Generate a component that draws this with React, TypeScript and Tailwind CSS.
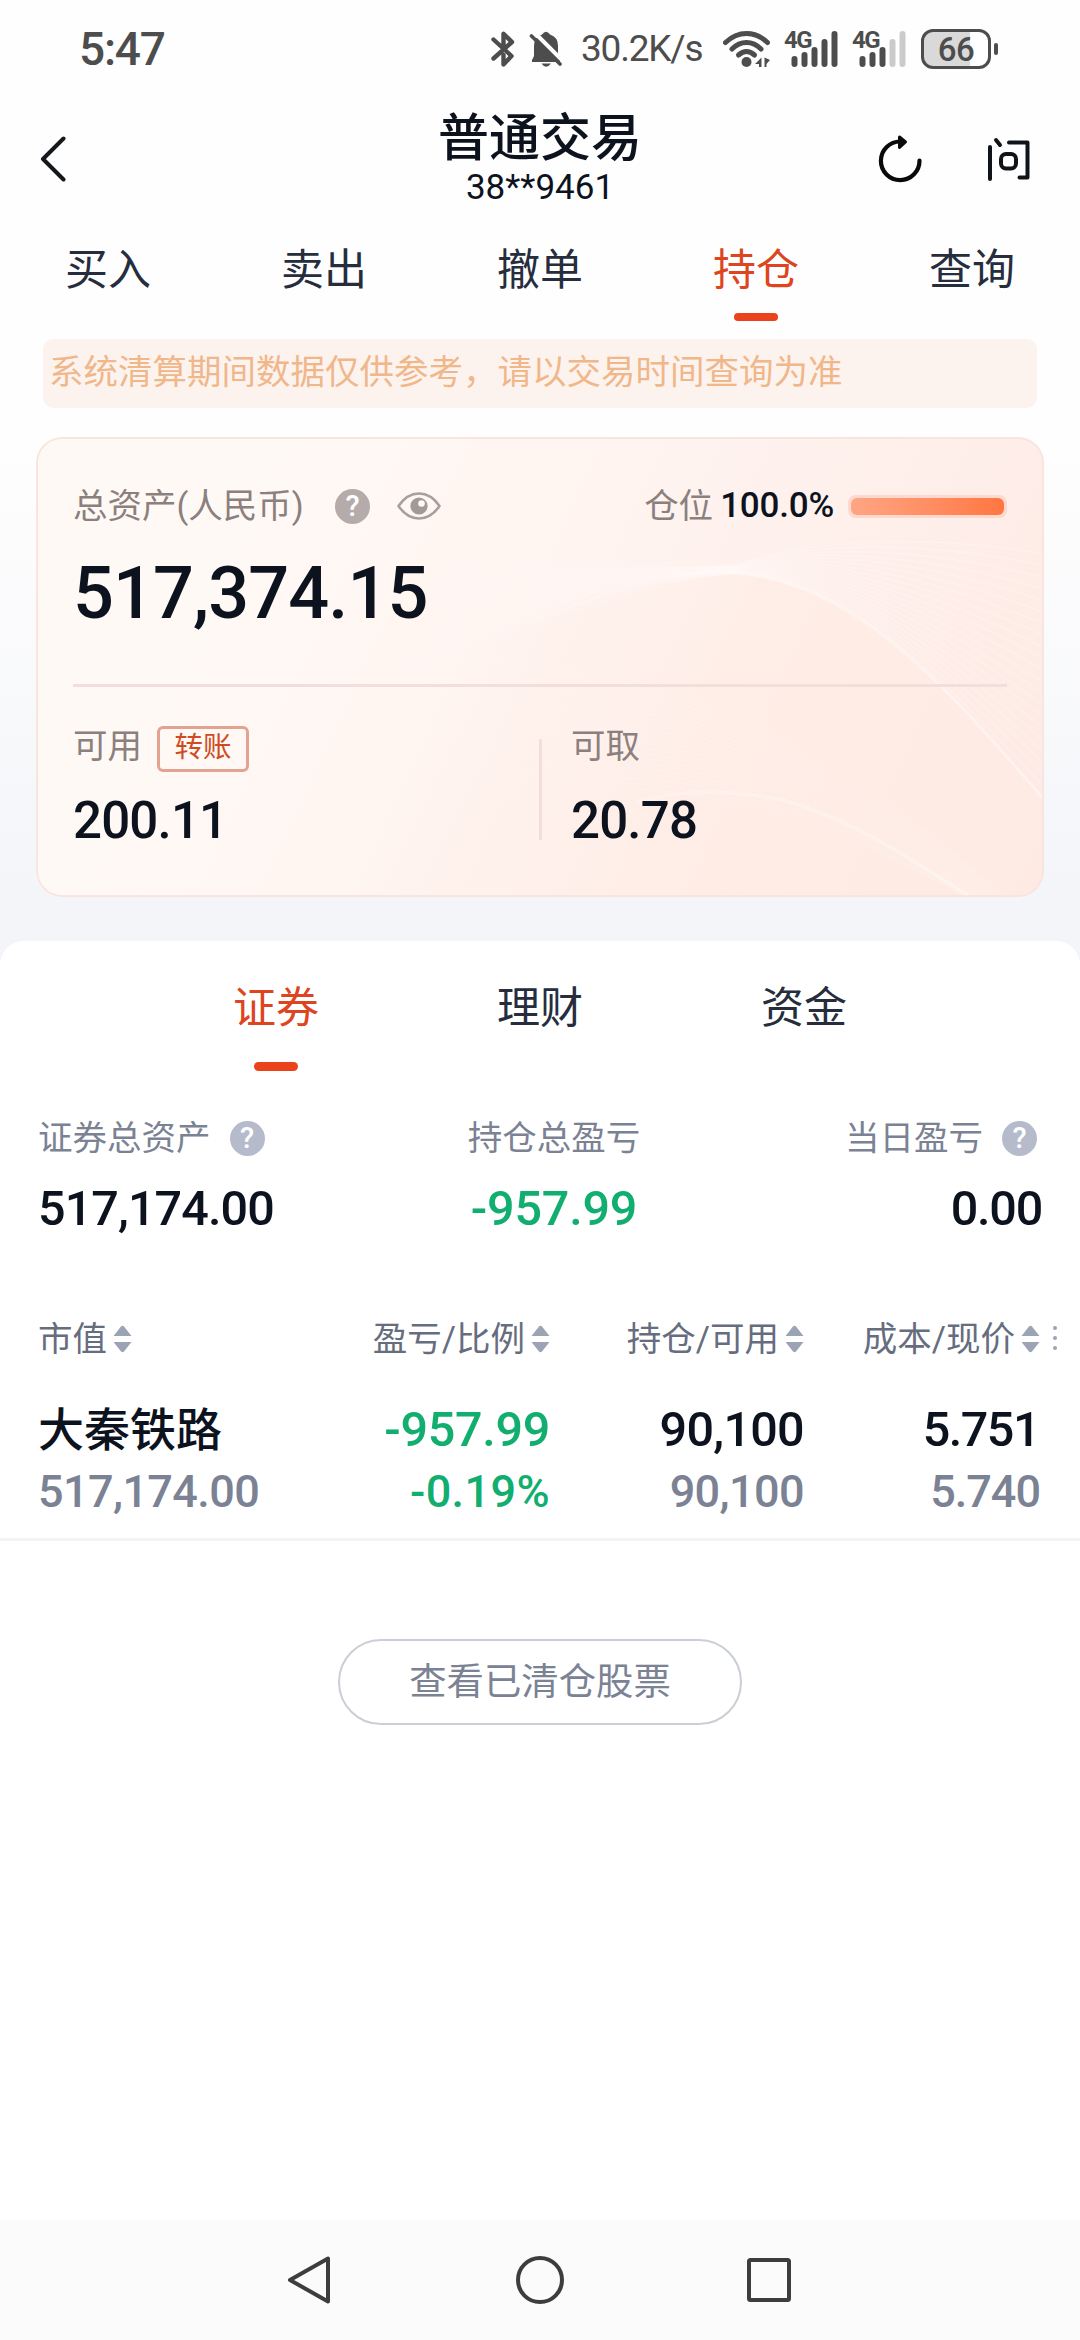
import React from "react";
import clsx from "clsx";

const tabs = ["买入", "卖出", "撤单", "持仓", "查询"];
const assetTabs = ["证券", "理财", "资金"];
const columns = ["市值", "盈亏/比例", "持仓/可用", "成本/现价"];

const HelpBadge: React.FC<{ className?: string }> = ({ className }) => (
  <span
    className={clsx(
      "flex h-[35px] w-[35px] items-center justify-center rounded-full text-[29px] leading-none font-medium text-white",
      className
    )}
  >
    ?
  </span>
);

const SortIcon = () => (
  <svg width="19" height="28" viewBox="0 0 19 28" fill="#9ca3b5">
    <path d="M8 1.6 Q9.5 0 11 1.6 L18.5 11 H0.5 Z" />
    <path d="M8 26.4 Q9.5 28 11 26.4 L18.5 17 H0.5 Z" />
  </svg>
);

const EyeIcon = () => (
  <svg width="44" height="28" viewBox="0 0 44 28" fill="none">
    <path
      d="M1.5 14 C7 6 14 1.5 22 1.5 S37 6 42.5 14 C37 22 30 26.5 22 26.5 S7 22 1.5 14 Z"
      stroke="#a89f9d"
      strokeWidth="2.6"
      strokeLinejoin="round"
    />
    <circle cx="22" cy="14" r="8.6" fill="#a39998" />
    <circle cx="24.5" cy="11.5" r="3.3" fill="#fff9f6" />
  </svg>
);

const SignalIcon: React.FC<{ level: number }> = ({ level }) => (
  <div className="relative h-9 w-[54px]">
    <span className="absolute -top-[4px] left-0 text-[24px] leading-[26px] font-bold tracking-[-1.5px]">
      4G
    </span>
    <svg className="absolute top-0 left-0" width="54" height="36">
      {[11, 15, 20, 28, 36].map((h, i) => (
        <rect
          key={h}
          x={7.5 + i * 10}
          y={36 - h}
          width="6"
          height={h}
          rx="3"
          fill={i < level ? "#4d4d4d" : "#cbcbcb"}
        />
      ))}
    </svg>
  </div>
);

const StatusBar = () => (
  <div className="flex h-[98px] items-center pr-[82px] pl-[79px] text-[#4d4d4d]">
    <span className="text-[46px] leading-[50px] font-medium tracking-[-1.200px]">5:47</span>
    <svg className="ml-auto" width="24" height="36" viewBox="0 0 24 36" fill="none">
      <path
        d="M2.5 8.5 L20.5 25 L12.5 33.5 V24 M2.5 27.5 L21 11 L12.5 2.8 V18"
        stroke="#4d4d4d"
        strokeWidth="4.4"
        strokeLinecap="round"
        strokeLinejoin="round"
      />
    </svg>
    <svg className="ml-[14px]" width="34" height="36" viewBox="0 0 34 36">
      <path
        d="M13 3.5 Q17 -2 21 3.5 Q29 6 29 15 V22 L31 29 V31 H3 V29 L5 25 V15 Q5 6 13 3.5 Z"
        fill="#4d4d4d"
      />
      <path d="M12.5 32.5 H22 Q17 39 12.5 32.5 Z" fill="#4d4d4d" />
      <path d="M5 1 L34 30" stroke="#fff" strokeWidth="4" />
      <path d="M2.5 5 L31 33" stroke="#4d4d4d" strokeWidth="3.6" strokeLinecap="round" />
    </svg>
    <span className="ml-[18px] w-[127px] text-[37px] leading-[40px] tracking-[-1.200px]">30.2K/s</span>
    <svg className="ml-[15px]" width="48" height="36" viewBox="0 0 48 36" fill="none">
      <g stroke="#4d4d4d" strokeWidth="5" strokeLinecap="round">
        <path d="M2.5 11.5 Q12 2.5 23.5 2.5 T44.5 11.5" />
        <path d="M9 18 Q15.500 11.500 23.500 11.500 T38 18" />
        <path d="M15.500 24 Q19.500 20.500 23.500 20.500 T31.500 24" />
      </g>
      <circle cx="23.5" cy="31" r="5" fill="#4d4d4d" />
      <path d="M38.500 26.500 V36 L36 36 V33 H32 Z M41.500 26.500 L47 29 L43.500 33 V36 H41.500 Z" fill="#4d4d4d" />
    </svg>
    <div className="ml-[13px] flex gap-[14px]">
      <SignalIcon level={5} />
      <SignalIcon level={3} />
    </div>
    <div className="ml-[15px] flex items-center gap-[3px]">
      <div className="flex h-10 w-[70px] items-center justify-center rounded-[12px] border-[3px] border-[#4d4d4d] bg-linear-to-r from-[#d9d9d9] from-72% to-white to-72% text-[33px] leading-none font-medium tracking-[-0.5px]">
        66
      </div>
      <div className="h-3 w-1 rounded-full bg-[#4d4d4d]" />
    </div>
  </div>
);

const Header = () => (
  <div className="relative flex h-[121px] items-center justify-between pr-[50px] pl-[40px]">
    <svg width="26" height="46" viewBox="0 0 26 46" fill="none">
      <path
        d="M23.500 2.500 L3 23 L23.500 43.500"
        stroke="#14181d"
        strokeWidth="4"
        strokeLinecap="round"
        strokeLinejoin="round"
      />
    </svg>
    <div className="absolute inset-x-0 flex flex-col items-center text-[#0d131e]">
      <h1 className="text-[51px] leading-[58px] font-medium">普通交易</h1>
      <p className="text-[35px] leading-[40px]">38**9461</p>
    </div>
    <div className="flex items-center gap-[66px]">
      <svg width="44" height="48" viewBox="0 1 44 48" fill="none">
        <path
          d="M41.500 26.500 A19.300 19.300 0 1 1 22.500 7.500"
          stroke="#0a0a0a"
          strokeWidth="4.200"
          strokeLinecap="round"
        />
        <path d="M21.500 3 L27.500 8 L21.500 13.500 Z" fill="#0a0a0a" stroke="#0a0a0a" strokeWidth="3" strokeLinejoin="round" />
      </svg>
      <svg width="42" height="44" viewBox="0 0 42 44" fill="none" stroke="#101418" strokeWidth="4">
        <path d="M2 10 V42 M8 3 L12 8" strokeLinecap="round" />
        <path d="M21 5.500 H39.500 V40.500 H31.500" strokeLinecap="round" strokeLinejoin="round" />
        <rect x="13" y="17" width="15" height="14.500" rx="5" />
      </svg>
    </div>
  </div>
);

// Decorative curves, all in the card's own 1008x460 space
const CardWaves = () => {
  const fan = Array.from({ length: 22 }, (_, i) => i / 21);
  return (
    <svg className="absolute inset-0" width="1008" height="460" viewBox="0 0 1008 460" fill="none">
      <defs>
        <linearGradient id="hill" x1="420" y1="180" x2="760" y2="330" gradientUnits="userSpaceOnUse">
          <stop offset="0" stopColor="#feebe3" stopOpacity="0" />
          <stop offset="1" stopColor="#feebe3" stopOpacity="0.7" />
        </linearGradient>
        <linearGradient id="crest" x1="300" y1="0" x2="1008" y2="0" gradientUnits="userSpaceOnUse">
          <stop offset="0" stopColor="#fff" stopOpacity="0" />
          <stop offset="0.5" stopColor="#fff" stopOpacity="0.24" />
          <stop offset="1" stopColor="#fff" stopOpacity="0.34" />
        </linearGradient>
      </defs>
      <path d="M300 240 C480 200 560 136 690 136 C820 138 920 262 1008 362 V460 H300 Z" fill="url(#hill)" />
      {fan.map((t) => (
        <path
          key={t}
          d={`M${300 + t * 40} ${120 + t * 120} C${470 + t * 60} ${130 + t * 50} 620 ${134 + t * 6} 700 ${
            128 + t * 9
          } C${780 + t * 40} ${100 + t * 46} ${900 + t * 20} ${98 + t * 164} 1008 ${117 + t * 245}`}
          stroke="url(#crest)"
          strokeWidth="1"
        />
      ))}
      <path
        d="M340 236 C500 190 590 135 690 135 C820 138 920 262 1008 362"
        stroke="url(#crest)"
        strokeWidth="3"
      />
      {fan.map((t) => (
        <path
          key={t}
          d={`M${380 + t * 60} ${220 + t * 150} C${560 + t * 40} ${210 + t * 120} ${760 - t * 20} ${
            270 + t * 85
          } ${970 - t * 40} 460`}
          stroke="url(#crest)"
          strokeWidth="1"
          opacity="0.6"
        />
      ))}
      <path
        d="M600 366 C640 352 700 352 750 364 C820 384 870 420 935 460"
        stroke="url(#crest)"
        strokeWidth="3.500"
      />
    </svg>
  );
};

const AssetCard = () => (
  <div className="relative mx-9 mt-[29px] h-[460px] overflow-hidden rounded-[26px] bg-linear-[115deg] from-[#fff9f5] from-20% via-[#fff3ef] via-55% to-[#fde9e3]">
    <CardWaves />
    <div className="relative h-full rounded-[26px] border-2 border-[#f9e5df] px-[35px] pt-[48px]">
      <div className="flex h-[38px] items-center text-[34.500px] leading-[38px] text-[#8b807d]">
        <span className="w-[262px]">总资产(人民币)</span>
        <HelpBadge className="bg-[#b5abaa]" />
        <span className="ml-[27px]">
          <EyeIcon />
        </span>
        <span className="ml-auto pb-px">仓位</span>
        <span className="ml-[7px] text-[35px] font-medium tracking-[-0.200px] text-[#0d131e]">100.0%</span>
        <div className="ml-[14px] h-[23px] w-[159px] rounded-[8px] bg-[#fcd8cd] p-[3px]">
          <div className="h-full rounded-[6px] bg-linear-to-r from-[#ffa583] to-[#ff7640]" />
        </div>
      </div>
      <div className="mt-[29px] text-[72px] leading-[80px] font-medium tracking-[-0.900px] text-[#0d131e]">
        517,374.15
      </div>
      <div className="mt-[50px] h-[3px] bg-[#f2dedb]" />
      <div className="mt-[39px] flex">
        <div className="w-[466px]">
          <div className="flex h-[46px] items-center">
            <span className="pb-[6px] text-[34.500px] leading-[40px] text-[#8b807d]">可用</span>
            <button className="ml-[15px] h-[46px] w-[92px] rounded-[6px] border-3 border-[#e3a391] pb-[2px] text-[28.500px] leading-[38px] text-[#d04a22]">
              转账
            </button>
          </div>
          <div className="mt-[19px] text-[51px] leading-[60px] font-medium tracking-[-0.800px] text-[#0d131e]">
            200.11
          </div>
        </div>
        <div className="mt-[13px] h-[101px] w-[3px] bg-[#f2dedb]" />
        <div className="pl-[29px]">
          <div className="flex h-[46px] items-center">
            <span className="pb-[6px] text-[34.500px] leading-[40px] text-[#8b807d]">可取</span>
          </div>
          <div className="mt-[19px] text-[51px] leading-[60px] font-medium tracking-[-0.800px] text-[#0d131e]">
            20.78
          </div>
        </div>
      </div>
    </div>
  </div>
);

const Holdings = () => (
  <div className="mt-11 flex-1 rounded-t-[24px] bg-white">
    <div className="flex justify-center pt-[42px]">
      {assetTabs.map((name, i) => (
        <div key={name} className="flex w-[264px] flex-col items-center">
          <span
            className={clsx("text-[43px] leading-[50px]", i === 0 ? "text-[#dc4520]" : "text-[#262d3d]")}
          >
            {name}
          </span>
          <span className={clsx("mt-[29px] h-[9px] w-11 rounded-full", i === 0 && "bg-[#ea431c]")} />
        </div>
      ))}
    </div>

    <div className="mt-[47px] grid grid-cols-[429px_174px_1fr] pr-[38px] pl-[38px] text-[34.500px] leading-[40px] text-[#7b8294]">
      <div>
        <div className="flex h-10 items-center gap-[19px]">
          证券总资产
          <HelpBadge className="bg-[#b6bbcc]" />
        </div>
        <div className="mt-[21px] text-[48.500px] leading-[60px] font-medium tracking-[-0.900px] text-[#0d131e]">
          517,174.00
        </div>
      </div>
      <div className="text-center">
        <div>持仓总盈亏</div>
        <div className="mt-[21px] text-[48.500px] leading-[60px] font-medium tracking-[-0.200px] text-[#12ae70]">
          -957.99
        </div>
      </div>
      <div className="text-right">
        <div className="flex h-10 items-center justify-end gap-[19px] pr-[5px]">
          当日盈亏
          <HelpBadge className="bg-[#b6bbcc]" />
        </div>
        <div className="mt-[21px] text-[48.500px] leading-[60px] font-medium tracking-[-1.200px] text-[#0d131e]">
          0.00
        </div>
      </div>
    </div>

    <div className="relative mt-20 grid grid-cols-[262px_250px_254px_236px] pl-[38px]">
      {columns.map((name, i) => (
        <div
          key={name}
          className={clsx(
            "flex h-10 items-center gap-[6px] text-[34.500px] leading-[40px] text-[#666d7e]",
            i > 0 && "justify-end"
          )}
        >
          {name}
          <SortIcon />
        </div>
      ))}
      <div className="absolute top-[7px] right-[23px] flex flex-col gap-[6px]">
        <span className="h-1 w-1 rounded-full bg-[#9ca3b5]" />
        <span className="h-1 w-1 rounded-full bg-[#9ca3b5]" />
        <span className="h-1 w-1 rounded-full bg-[#9ca3b5]" />
      </div>
    </div>

    <div className="mt-[41px] border-b-3 border-[#f3f3f4] pb-[21px] pl-[38px]">
      <div className="grid grid-cols-[262px_250px_254px_235px] text-right text-[48.500px] leading-[60px] font-medium tracking-[-0.700px] text-[#0d131e]">
        <span className="text-left text-[46px] tracking-normal">大秦铁路</span>
        <span className="tracking-[-0.300px] text-[#12ae70]">-957.99</span>
        <span>90,100</span>
        <span className="tracking-[-1.500px]">5.751</span>
      </div>
      <div className="mt-[7px] grid grid-cols-[262px_250px_254px_236px] text-right text-[45px] leading-[50px] font-medium tracking-[-0.600px] text-[#7b8294]">
        <span className="text-left">517,174.00</span>
        <span className="tracking-[0.400px] text-[#12ae70]">-0.19%</span>
        <span>90,100</span>
        <span className="tracking-[-1px]">5.740</span>
      </div>
    </div>

    <button className="mx-auto mt-[98px] block h-[86px] w-[404px] rounded-full border-2 border-[#caced5] text-[37.400px] leading-[82px] text-[#7b8294]">
      查看已清仓股票
    </button>
  </div>
);

const NavBar = () => (
  <div className="flex h-[120px] items-center justify-center gap-[181px] bg-[#fbfbfb]">
    <svg width="48" height="50" viewBox="0 0 48 50" fill="none">
      <path d="M41 3.500 V46.500 L3 25 Z" stroke="#3d3d3d" strokeWidth="4" strokeLinejoin="round" />
    </svg>
    <svg width="48" height="48" viewBox="0 0 48 48" fill="none">
      <circle cx="24" cy="24" r="22" stroke="#3d3d3d" strokeWidth="4" />
    </svg>
    <svg width="48" height="48" viewBox="0 0 48 48" fill="none">
      <rect x="4" y="4" width="40" height="40" rx="1.500" stroke="#3d3d3d" strokeWidth="4" />
    </svg>
  </div>
);

const App: React.FC = () => {
  const activeTab = "持仓";

  return (
    <div className="flex h-[2340px] w-[1080px] flex-col overflow-hidden bg-linear-to-b from-[#fefefe] from-19% to-[#f4f5f9] to-39% font-[Roboto,'Noto_Sans_CJK_SC',sans-serif]">
      <StatusBar />
      <Header />
      <div className="grid h-[120px] grid-cols-5 pt-[26px]">
        {tabs.map((name) => (
          <div key={name} className="flex flex-col items-center">
            <span
              className={clsx(
                "text-[43px] leading-[50px]",
                name === activeTab ? "text-[#dc4520]" : "text-[#262d3d]"
              )}
            >
              {name}
            </span>
            <span
              className={clsx("mt-[18px] h-2 w-11 rounded-full", name === activeTab && "bg-[#ea431c]")}
            />
          </div>
        ))}
      </div>
      <div className="mx-[43px] h-[69px] rounded-[11px] bg-[#fcf3ef] pl-[6px] text-[34.500px] leading-[67px] whitespace-nowrap text-[#f0b78a]">
        系统清算期间数据仅供参考，请以交易时间查询为准
      </div>
      <AssetCard />
      <Holdings />
      <NavBar />
    </div>
  );
};

export default App;
